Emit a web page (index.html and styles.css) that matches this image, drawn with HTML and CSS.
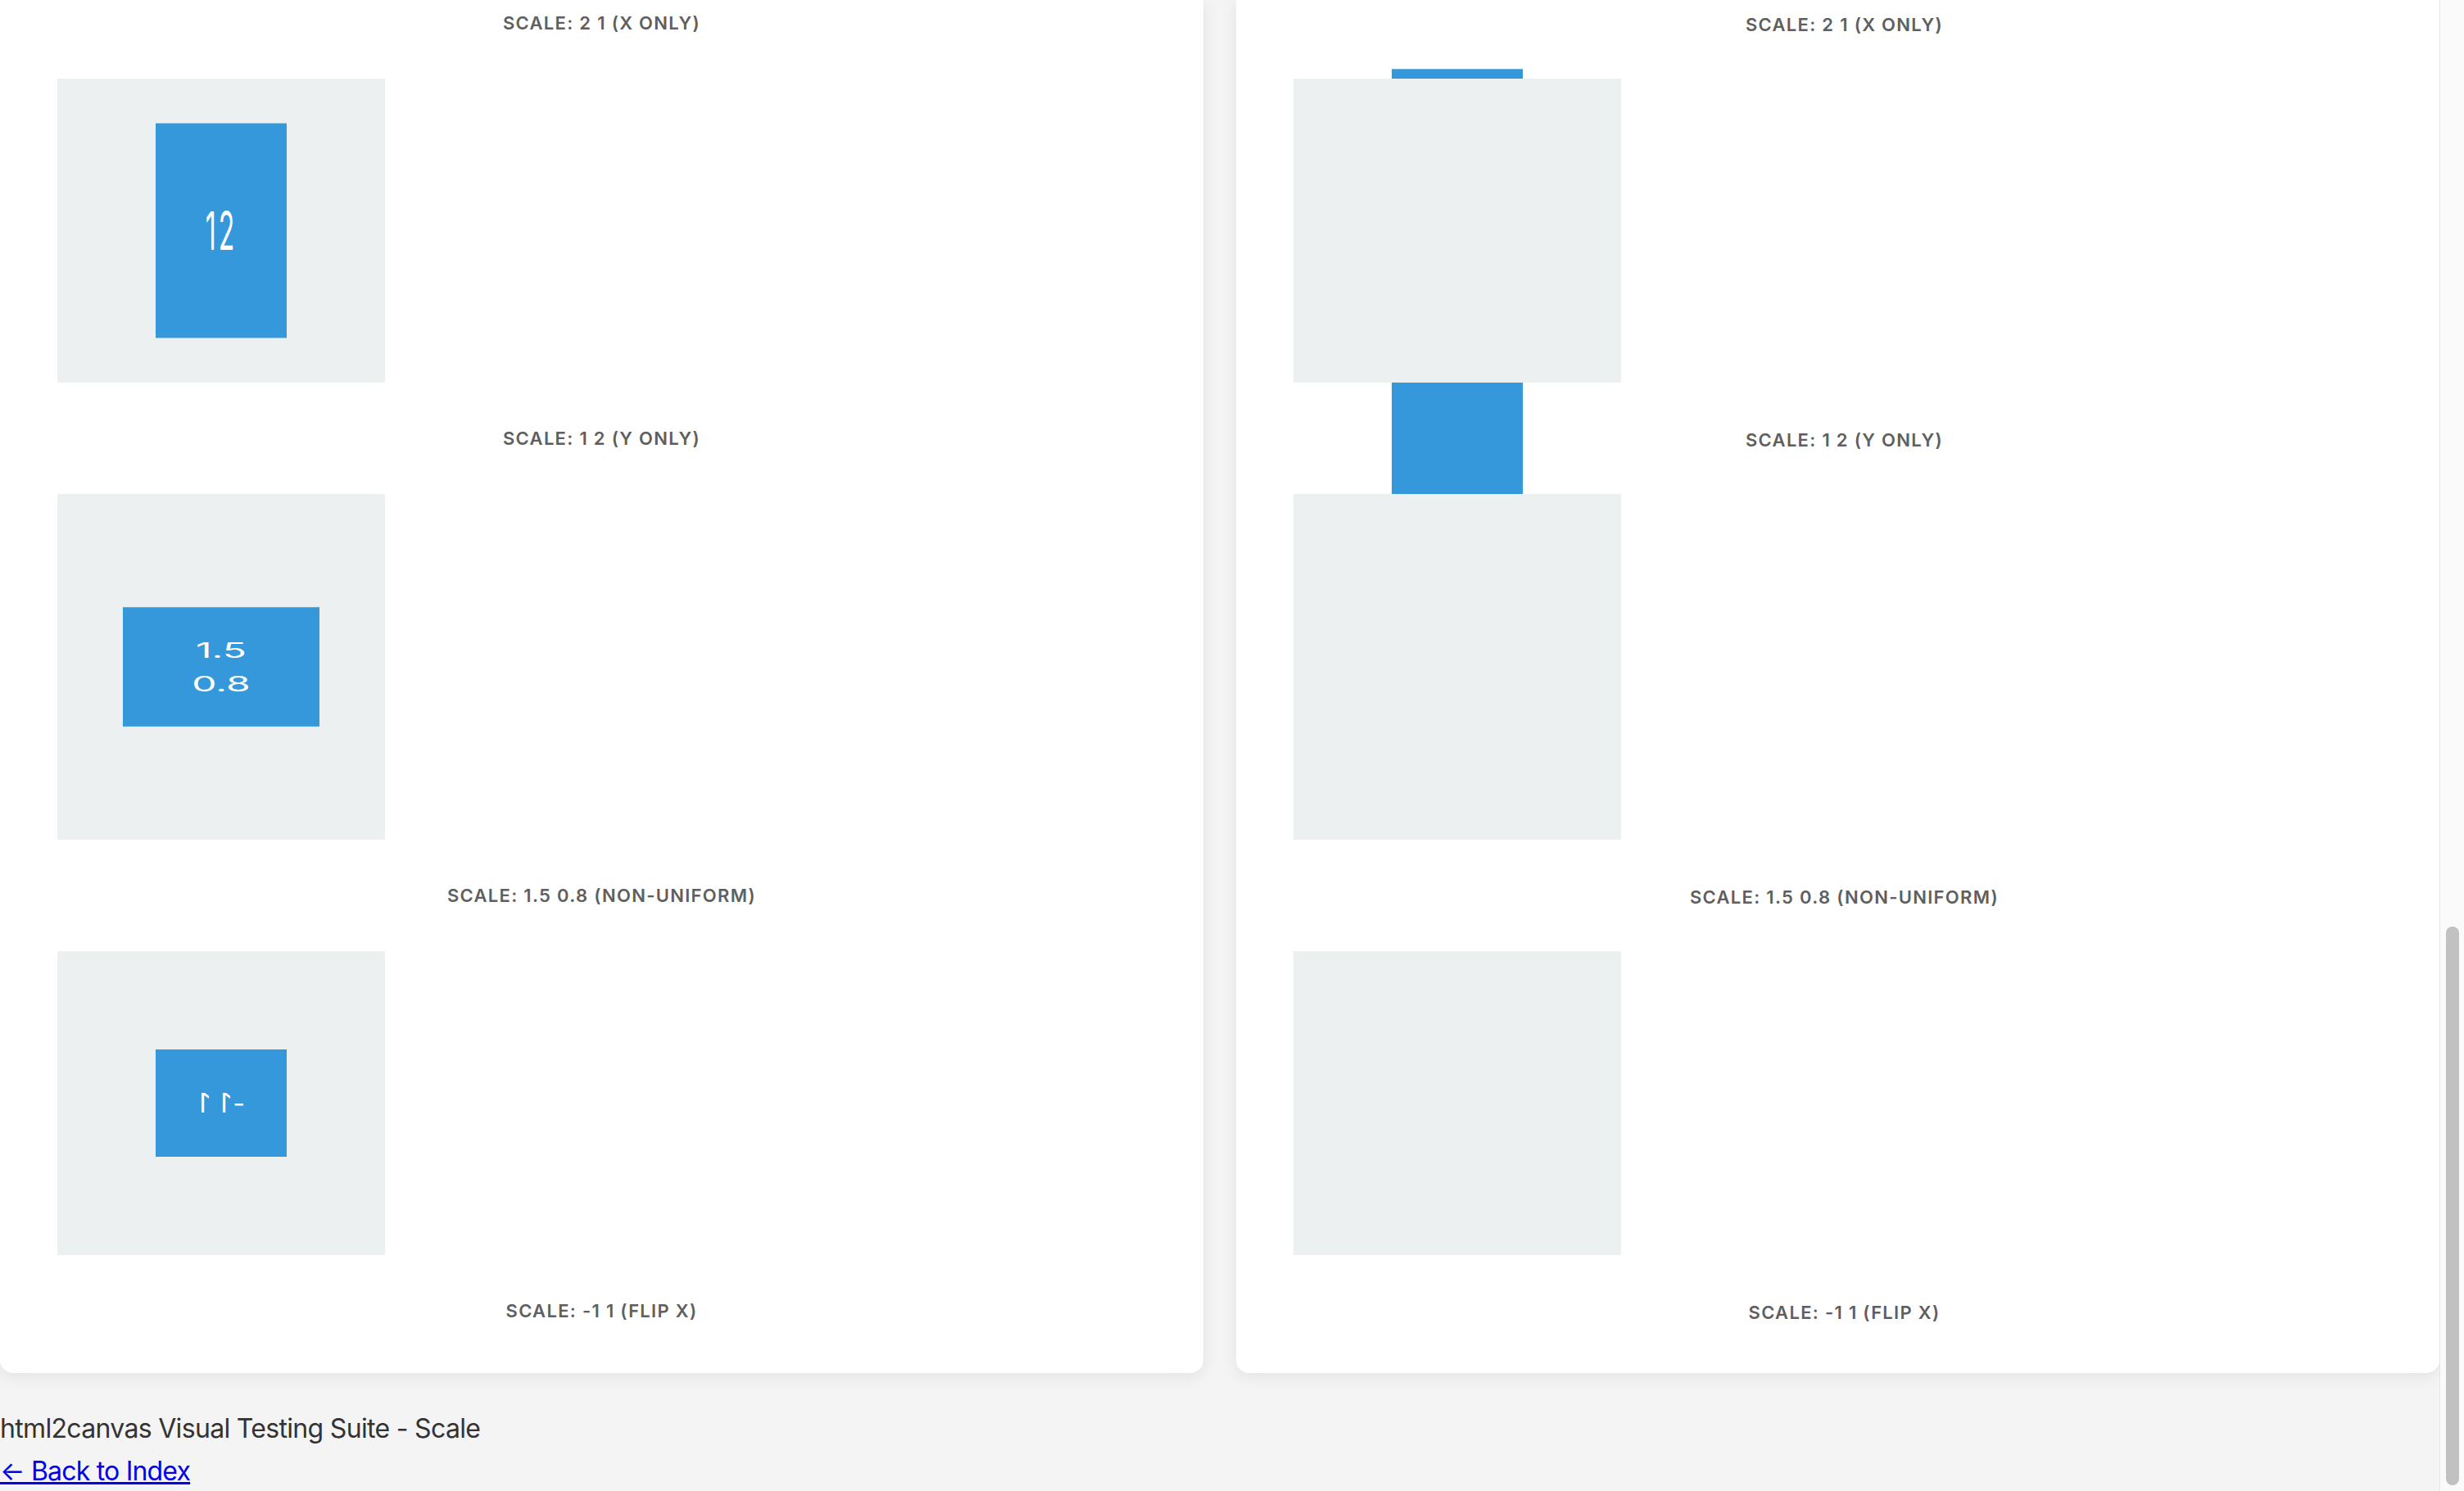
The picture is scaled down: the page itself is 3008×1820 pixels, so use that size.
FILE: index.html
```html
<!DOCTYPE html>
<html lang="en">
<head>
<meta charset="utf-8">
<title>html2canvas Visual Testing Suite - Scale</title>
<link rel="stylesheet" href="styles.css">
</head>
<body>
<div class="page">
  <div class="content">
    <div class="grid">
      <section class="card">
        <div class="label">Scale: 2 1 (X only)</div>
        <div class="stage"><div class="box sy2">12</div></div>
        <div class="label">Scale: 1 2 (Y only)</div>
        <div class="stage"><div class="box snu">1.5 0.8</div></div>
        <div class="label">Scale: 1.5 0.8 (non-uniform)</div>
        <div class="stage"><div class="box fx">-1 1</div></div>
        <div class="label">Scale: -1 1 (flip X)</div>
      </section>
      <section class="card card-render">
        <div class="label">Scale: 2 1 (X only)</div>
        <div class="stage">
          <div class="box hidden">12</div>
          <div class="ghost ghost-top"></div>
          <div class="ghost ghost-below"></div>
        </div>
        <div class="label">Scale: 1 2 (Y only)</div>
        <div class="stage"><div class="box hidden">1.5 0.8</div></div>
        <div class="label">Scale: 1.5 0.8 (non-uniform)</div>
        <div class="stage"><div class="box hidden">-1 1</div></div>
        <div class="label">Scale: -1 1 (flip X)</div>
      </section>
    </div>
    <footer class="footer">
      <p class="footer-title">html2canvas Visual Testing Suite - Scale</p>
      <a class="back" href="#">← Back to Index</a>
    </footer>
  </div>
  <div class="scrollbar"><div class="thumb"></div></div>
</div>
</body>
</html>
```

FILE: styles.css
```css
* { box-sizing: border-box; }
html, body { margin: 0; padding: 0; }
body {
  background: #f4f4f4;
  font-family: Inter, "Noto Sans", "Liberation Sans", sans-serif;
  color: #333;
}
.page {
  display: flex;
  height: 1820px;
  overflow: hidden;
}
.content {
  flex: 1;
  min-width: 0;
}
.grid {
  display: grid;
  grid-template-columns: 1fr 1fr;
  column-gap: 40px;
}
.card {
  background: #fff;
  border-radius: 0 0 16px 16px;
  box-shadow: 0 4px 20px rgba(0, 0, 0, 0.08);
  padding: 12px 70px 60px;
  display: flex;
  flex-direction: column;
  gap: 52px;
}
.card-render .label {
  position: relative;
  top: 2px;
  left: 8px;
}
.label {
  font-size: 22px;
  line-height: 32px;
  font-weight: 600;
  letter-spacing: 1.3px;
  text-transform: uppercase;
  text-align: center;
  color: #5f5f5f;
}
.stage {
  position: relative;
  align-self: flex-start;
  background: #ecf0f1;
  padding: 120px;
}
.box {
  width: 160px;
  padding: 40px;
  background: #3498db;
  color: #fff;
  font-size: 32px;
  line-height: 51px;
  text-align: center;
}
.sy2 { transform: scale(1, 2); letter-spacing: 3px; }
.snu { transform: scale(1.5, 0.8); }
.fx { transform: scale(-1, 1); letter-spacing: 2px; }
.hidden { visibility: hidden; }
.ghost {
  position: absolute;
  left: 120px;
  width: 160px;
  background: #3498db;
}
.ghost-top {
  top: -12px;
  height: 12px;
  border-top: 1px solid #6fb3e3;
}
.ghost-below {
  top: 100%;
  height: 136px;
}
.footer {
  padding-top: 48px;
}
.footer-title {
  margin: 0;
  font-size: 32px;
  line-height: 40px;
  letter-spacing: -0.68px;
  color: #333;
}
.back {
  display: inline-block;
  margin-top: 12px;
  font-size: 32px;
  line-height: 40px;
  letter-spacing: -0.8px;
  color: #0000ee;
  text-decoration: underline;
}
.scrollbar {
  width: 30px;
  flex: none;
  border-left: 1px solid #e6e6e6;
  background: #fafafa;
  padding-left: 7px;
}
.thumb {
  margin-top: 1131px;
  width: 16px;
  height: 682px;
  border-radius: 8px;
  background: #c1c1c1;
}
```
